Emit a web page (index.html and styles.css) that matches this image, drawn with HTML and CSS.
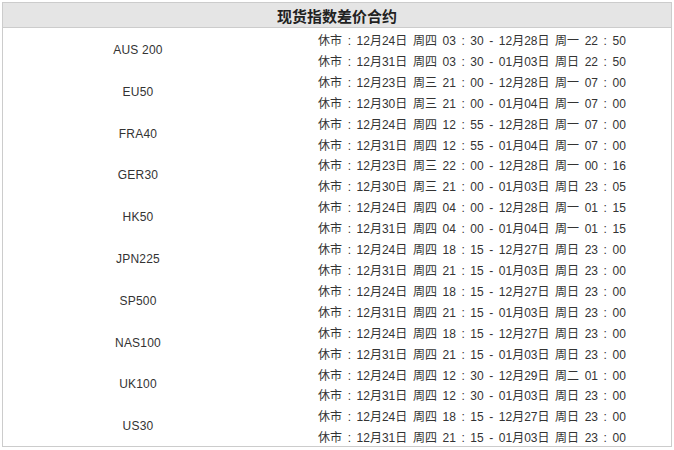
FILE: index.html
```html
<!DOCTYPE html>
<html lang="zh-CN">
<head>
  <meta charset="UTF-8" />
  <title>现货指数差价合约</title>
  <link rel="stylesheet" href="styles.css">
</head>
<body>
  <table class="hours">
    <thead>
      <tr><th colspan="2">现货指数差价合约</th></tr>
    </thead>
    <tbody>
      <tr>
        <td class="name">AUS 200</td>
        <td class="times">
          <p>休市 : 12月24日 周四 03 : 30 - 12月28日 周一 22 : 50</p>
          <p>休市 : 12月31日 周四 03 : 30 - 01月03日 周日 22 : 50</p>
        </td>
      </tr>
      <tr>
        <td class="name">EU50</td>
        <td class="times">
          <p>休市 : 12月23日 周三 21 : 00 - 12月28日 周一 07 : 00</p>
          <p>休市 : 12月30日 周三 21 : 00 - 01月04日 周一 07 : 00</p>
        </td>
      </tr>
      <tr>
        <td class="name">FRA40</td>
        <td class="times">
          <p>休市 : 12月24日 周四 12 : 55 - 12月28日 周一 07 : 00</p>
          <p>休市 : 12月31日 周四 12 : 55 - 01月04日 周一 07 : 00</p>
        </td>
      </tr>
      <tr>
        <td class="name">GER30</td>
        <td class="times">
          <p>休市 : 12月23日 周三 22 : 00 - 12月28日 周一 00 : 16</p>
          <p>休市 : 12月30日 周三 21 : 00 - 01月03日 周日 23 : 05</p>
        </td>
      </tr>
      <tr>
        <td class="name">HK50</td>
        <td class="times">
          <p>休市 : 12月24日 周四 04 : 00 - 12月28日 周一 01 : 15</p>
          <p>休市 : 12月31日 周四 04 : 00 - 01月04日 周一 01 : 15</p>
        </td>
      </tr>
      <tr>
        <td class="name">JPN225</td>
        <td class="times">
          <p>休市 : 12月24日 周四 18 : 15 - 12月27日 周日 23 : 00</p>
          <p>休市 : 12月31日 周四 21 : 15 - 01月03日 周日 23 : 00</p>
        </td>
      </tr>
      <tr>
        <td class="name">SP500</td>
        <td class="times">
          <p>休市 : 12月24日 周四 18 : 15 - 12月27日 周日 23 : 00</p>
          <p>休市 : 12月31日 周四 21 : 15 - 01月03日 周日 23 : 00</p>
        </td>
      </tr>
      <tr>
        <td class="name">NAS100</td>
        <td class="times">
          <p>休市 : 12月24日 周四 18 : 15 - 12月27日 周日 23 : 00</p>
          <p>休市 : 12月31日 周四 21 : 15 - 01月03日 周日 23 : 00</p>
        </td>
      </tr>
      <tr>
        <td class="name">UK100</td>
        <td class="times">
          <p>休市 : 12月24日 周四 12 : 30 - 12月29日 周二 01 : 00</p>
          <p>休市 : 12月31日 周四 12 : 30 - 01月03日 周日 23 : 00</p>
        </td>
      </tr>
      <tr>
        <td class="name">US30</td>
        <td class="times">
          <p>休市 : 12月24日 周四 18 : 15 - 12月27日 周日 23 : 00</p>
          <p>休市 : 12月31日 周四 21 : 15 - 01月03日 周日 23 : 00</p>
        </td>
      </tr>
    </tbody>
  </table>
</body>
</html>
```

FILE: styles.css
```css
body {
  margin: 2px;
  font-family: "Liberation Sans", "Noto Sans CJK SC", sans-serif;
  font-size: 12px;
  color: #333;
  background: #fff;
}

.hours {
  width: 670px;
  border-collapse: collapse;
  border: 1px solid #ccc;
}

.hours th {
  height: 24px;
  padding: 0;
  background: #e5e5e5;
  border-bottom: 1px solid #ccc;
  font-size: 15px;
  font-weight: bold;
  color: #222;
  text-align: center;
}

.hours td {
  padding: 0;
  text-align: center;
  vertical-align: middle;
}

.hours .name {
  width: 270px;
  padding-top: 2px;
  letter-spacing: 0.2px;
}

.times p {
  margin: 0;
  padding-top: 6px;
  line-height: 14.9px;
  word-spacing: 2.25px;
}
```
